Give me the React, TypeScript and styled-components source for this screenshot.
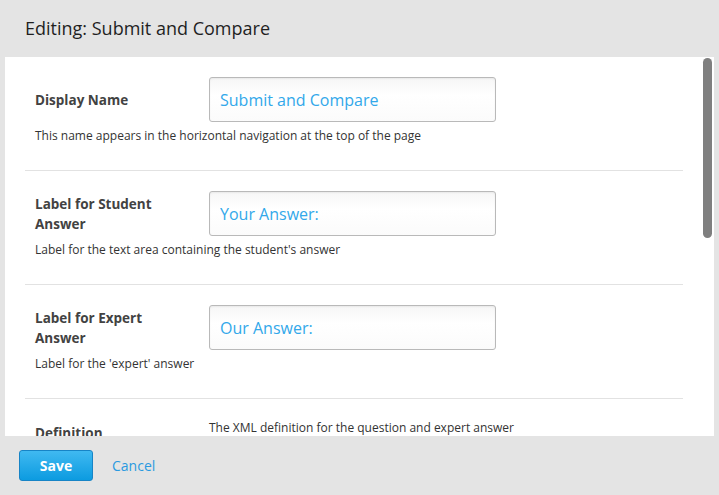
import React from "react";
import styled, { createGlobalStyle } from "styled-components";

const Global = createGlobalStyle`
  html, body { margin: 0; padding: 0; }
  body {
    background: #e4e4e4;
    font-family: "Open Sans", "Liberation Sans", sans-serif;
    overflow: hidden;
  }
`;

const Page = styled.div`
  height: 495px;
  display: flex;
  flex-direction: column;
`;

const Header = styled.header`
  height: 57px;
  flex: 0 0 57px;
  display: flex;
  align-items: center;
  padding-left: 25px;
  box-sizing: border-box;
`;

const Title = styled.h1`
  margin: 0;
  font-size: 18px;
  font-weight: 400;
  color: #1f1f1f;
  padding-bottom: 1px;
`;

const Panel = styled.main`
  flex: 1;
  margin: 0 5px;
  background: #fff;
  overflow: hidden;
  position: relative;
`;

const Content = styled.div`
  padding: 0 31px 0 20px;
`;

const Row = styled.section<{ $last?: boolean }>`
  padding: 20px 10px 25px;
  border-bottom: ${(p) => (p.$last ? "none" : "1px solid #e2e2e2")};
`;

const Line = styled.div<{ $top?: boolean }>`
  display: flex;
  align-items: ${(p) => (p.$top ? "flex-start" : "center")};
`;

const Label = styled.label<{ $pt?: number }>`
  flex: 0 0 174px;
  box-sizing: border-box;
  padding-right: 28px;
  padding-top: ${(p) => p.$pt ?? 1}px;
  font-size: 13.5px;
  font-weight: 700;
  line-height: 20px;
  color: #424242;
`;

const Input = styled.input`
  width: 287px;
  height: 45px;
  box-sizing: border-box;
  border: 1px solid #b9b9b9;
  border-radius: 3px;
  background: linear-gradient(#f6f6f6, #ffffff 40%, #fbfbfb);
  box-shadow: inset 0 1px 2px rgba(0, 0, 0, 0.06);
  padding: 0 10px;
  font-family: "Open Sans", "Liberation Sans", sans-serif;
  font-size: 16px;
  color: #32a8ea;
  outline: none;
`;

const Help = styled.p`
  margin: 5px 0 0;
  font-size: 12px;
  line-height: 18px;
  color: #333;
`;

const SideHelp = styled.p`
  margin: 0;
  font-size: 12px;
  line-height: 18px;
  color: #333;
`;

const Thumb = styled.div`
  position: absolute;
  top: 1px;
  right: 2px;
  width: 9px;
  height: 180px;
  border-radius: 5px;
  background: #7f7f7f;
`;

const Footer = styled.footer`
  flex: 0 0 59px;
  display: flex;
  align-items: center;
  gap: 19px;
  padding: 0 19px 1px;
  box-sizing: border-box;
`;

const SaveButton = styled.button`
  width: 74px;
  height: 31px;
  border: 1px solid #1784c6;
  border-radius: 3px;
  background: linear-gradient(#40b9f1, #0c9be0);
  color: #fff;
  font-family: "Open Sans", "Liberation Sans", sans-serif;
  font-size: 14px;
  font-weight: 700;
  cursor: pointer;
`;

const CancelLink = styled.a`
  font-size: 14px;
  color: #2a9ae0;
  text-decoration: none;
  cursor: pointer;
`;

export default function App() {
  return (
    <Page>
      <Global />
      <Header>
        <Title>Editing: Submit and Compare</Title>
      </Header>
      <Panel>
        <Content>
          <Row>
            <Line>
              <Label>Display Name</Label>
              <Input defaultValue="Submit and Compare" />
            </Line>
            <Help>This name appears in the horizontal navigation at the top of the page</Help>
          </Row>
          <Row>
            <Line>
              <Label>Label for Student Answer</Label>
              <Input defaultValue="Your Answer:" />
            </Line>
            <Help>Label for the text area containing the student's answer</Help>
          </Row>
          <Row>
            <Line>
              <Label>Label for Expert Answer</Label>
              <Input defaultValue="Our Answer:" />
            </Line>
            <Help>Label for the 'expert' answer</Help>
          </Row>
          <Row $last>
            <Line $top>
              <Label $pt={4}>Definition</Label>
              <SideHelp>The XML definition for the question and expert answer</SideHelp>
            </Line>
          </Row>
        </Content>
        <Thumb />
      </Panel>
      <Footer>
        <SaveButton>Save</SaveButton>
        <CancelLink>Cancel</CancelLink>
      </Footer>
    </Page>
  );
}
